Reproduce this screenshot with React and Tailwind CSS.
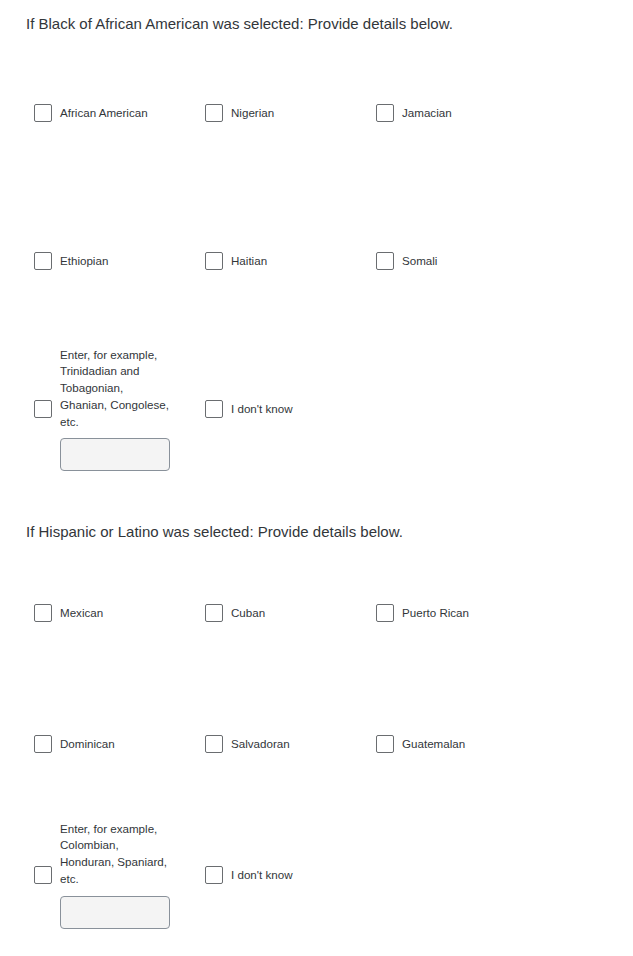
const black = [
  ["African American", "Nigerian", "Jamacian"],
  ["Ethiopian", "Haitian", "Somali"],
];

const hispanic = [
  ["Mexican", "Cuban", "Puerto Rican"],
  ["Dominican", "Salvadoran", "Guatemalan"],
];

function Box() {
  return (
    <span className="w-[18px] h-[18px] shrink-0 border border-[#6a6d70] rounded-[2px] bg-white" />
  );
}

function Option({ label }) {
  return (
    <label className="flex items-center gap-[8px]">
      <Box />
      <span>{label}</span>
    </label>
  );
}

function OtherOption({ lines }) {
  return (
    <div className="flex items-center gap-[8px]">
      <Box />
      <div className="flex flex-col">
        <div className="leading-[16.75px] w-[125px]">
          {lines.map(l => (
            <div key={l}>{l}</div>
          ))}
        </div>
        <input
          type="text"
          className="mt-[8px] w-[110px] h-[33px] bg-[#f4f4f4] border border-[#89919a] rounded-[4px]"
        />
      </div>
    </div>
  );
}

function Section({ title, rows, other, rowH }) {
  return (
    <div>
      <h2 className="text-[15px] leading-[20px] h-[20px] pl-[26px]">{title}</h2>
      <div className="mt-[5px] pl-[34px]">
        {rows.map((row, i) => (
          <div key={i} className={`grid grid-cols-[171px_171px_171px] items-center ${rowH}`}>
            {row.map(label => (
              <Option key={label} label={label} />
            ))}
          </div>
        ))}
        <div className={`grid grid-cols-[171px_171px_171px] items-center ${rowH}`}>
          <OtherOption lines={other} />
          <Option label="I don't know" />
        </div>
      </div>
    </div>
  );
}

export default function App() {
  return (
    <div className="w-[633px] min-h-[956px] bg-white text-[#32363a] text-[11.6px] pt-[14px] pb-[16px]" style={{ fontFamily: '"Liberation Sans", Arial, sans-serif' }}>
      <Section
        title="If Black of African American was selected: Provide details below."
        rows={black}
        other={["Enter, for example,", "Trinidadian and", "Tobagonian,", "Ghanian, Congolese,", "etc."]}
        rowH="h-[148px]"
      />
      <div className="h-[39px]" />
      <Section
        title="If Hispanic or Latino was selected: Provide details below."
        rows={hispanic}
        other={["Enter, for example,", "Colombian,", "Honduran, Spaniard,", "etc."]}
        rowH="h-[131px]"
      />
    </div>
  );
}
